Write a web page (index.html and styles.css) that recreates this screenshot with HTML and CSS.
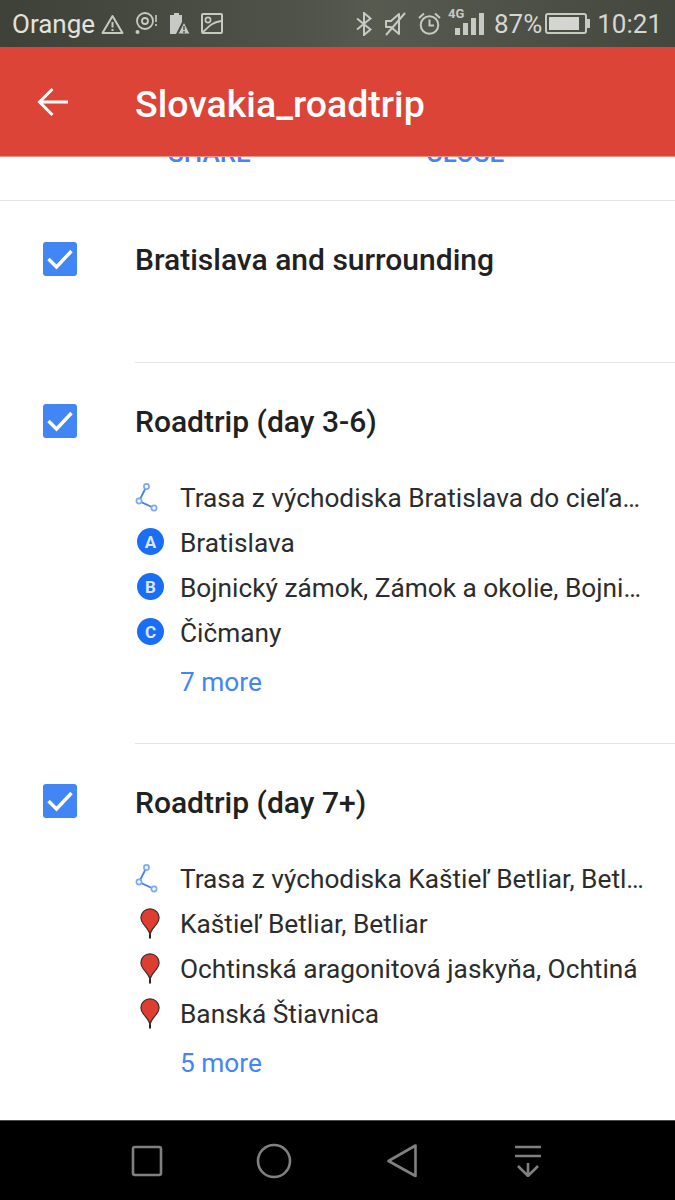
FILE: index.html
```html
<!DOCTYPE html>
<html lang="en">
<head>
    <meta charset="UTF-8">
    <meta name="viewport" content="width=device-width, initial-scale=1.0">
    <title>Slovakia_roadtrip</title>
    <link rel="stylesheet" href="styles.css">
</head>
<body>
    <svg class="defs" width="0" height="0">
        <symbol id="route" viewBox="0 0 24 30">
            <path d="M11.500 3.500 L4 18 L19 25" fill="none" stroke="#3f7ff0" stroke-width="1.800"/>
            <circle cx="11.500" cy="3.500" r="2.600" fill="#fff" stroke="#79a9f8" stroke-width="1.700"/>
            <circle cx="4" cy="18" r="2.600" fill="#fff" stroke="#79a9f8" stroke-width="1.700"/>
            <circle cx="19" cy="25" r="2.600" fill="#fff" stroke="#79a9f8" stroke-width="1.700"/>
        </symbol>
        <symbol id="pin" viewBox="0 0 20 31">
            <path d="M10 20 V30.500" stroke="#2e2422" stroke-width="2"/>
            <path d="M10 27 C9.600 22.500 7 20.500 3.800 16.500 C2 14.500 0.900 12.500 0.900 9.800 C0.900 4.800 5 0.800 10 0.800 C15 0.800 19.100 4.800 19.100 9.800 C19.100 12.500 18 14.500 16.200 16.500 C13 20.500 10.400 22.500 10 27 Z" fill="#de3e32" stroke="#40302e" stroke-width="1.200"/>
        </symbol>
    </svg>

    <!-- Status bar -->
    <div class="status-bar">
        <div class="status-left">
            <span class="carrier">Orange</span>
            <svg class="ic" width="23" height="20" viewBox="0 0 23 20"><path d="M11.500 2 L21.500 19 H1.500 Z" fill="none" stroke="#c8c8c4" stroke-width="2" stroke-linejoin="round"/><path d="M11.500 8 V13.500 M11.500 15 V17" stroke="#c8c8c4" stroke-width="2"/></svg>
            <svg class="ic" width="23" height="23" viewBox="0 0 23 23"><circle cx="10" cy="9" r="8" fill="none" stroke="#c8c8c4" stroke-width="1.800"/><circle cx="10" cy="9" r="3" fill="none" stroke="#c8c8c4" stroke-width="1.800"/><path d="M21 3 V10 M21 12 V14" stroke="#c8c8c4" stroke-width="1.600"/><circle cx="2.500" cy="20" r="2" fill="#c8c8c4"/></svg>
            <svg class="ic" width="21" height="22" viewBox="0 0 21 22"><path d="M5 0 H10 V2 H13 V9 L7 21 H1 V2 H5 Z" fill="#c8c8c4"/><path d="M15 9 L21 21 H9 Z" fill="#c8c8c4" stroke="#4a4d41" stroke-width="1"/><path d="M15 13 V17 M15 18 V20" stroke="#4a4d41" stroke-width="1.400"/></svg>
            <svg class="ic" width="22" height="21" viewBox="0 0 22 21"><rect x="1" y="1" width="20" height="19" rx="1" fill="none" stroke="#c8c8c4" stroke-width="2"/><circle cx="7" cy="7" r="2.600" fill="none" stroke="#c8c8c4" stroke-width="1.600"/><path d="M2 19 C7 15 9 10 20 8" fill="none" stroke="#c8c8c4" stroke-width="1.800"/></svg>
        </div>
        <div class="status-right">
            <svg class="ic" width="18" height="24" viewBox="0 0 18 24"><path d="M2 6.500 L15.500 17.500 L9 23 V1 L15.500 6.500 L2 17.500" fill="none" stroke="#c8c8c4" stroke-width="2"/></svg>
            <svg class="ic" width="23" height="24" viewBox="0 0 23 24"><path d="M2 9 H7 L15 2 V22 L7 15 H2 Z" fill="none" stroke="#c8c8c4" stroke-width="2" stroke-linejoin="round"/><path d="M2 23 L21 1" stroke="#c8c8c4" stroke-width="2"/></svg>
            <svg class="ic" width="23" height="23" viewBox="0 0 23 23"><circle cx="11.500" cy="13" r="8.800" fill="none" stroke="#c8c8c4" stroke-width="2"/><path d="M11.500 7.500 V13.500 H16 M1 6 L6 1.500 M22 6 L17 1.500" fill="none" stroke="#c8c8c4" stroke-width="2"/></svg>
            <div class="signal">
                <span class="net">4G</span>
                <span class="bar bar-1"></span>
                <span class="bar bar-2"></span>
                <span class="bar bar-3"></span>
                <span class="bar bar-4"></span>
            </div>
            <span class="percent">87%</span>
            <div class="battery"><span class="battery-fill"></span></div>
            <span class="clock">10:21</span>
        </div>
    </div>

    <!-- App bar -->
    <header class="app-bar">
        <svg class="back" width="31" height="30" viewBox="0 0 31 30"><path d="M31 15 H3 M15.500 2 L2.500 15 L15.500 28" fill="none" stroke="#fff" stroke-width="3"/></svg>
        <h1 class="app-title">Slovakia_roadtrip</h1>
    </header>

    <main class="content">
        <div class="actions">
            <span class="action action-share">SHARE</span>
            <span class="action action-close">CLOSE</span>
        </div>

        <section class="layer layer-first">
            <div class="check"><svg width="34" height="34" viewBox="0 0 34 34"><path d="M5.500 17 L13.500 25 L28.500 9" fill="none" stroke="#fff" stroke-width="3.400"/></svg></div>
            <div class="layer-body">
                <h2 class="layer-title">Bratislava and surrounding</h2>
            </div>
        </section>

        <section class="layer layer-two">
            <div class="check"><svg width="34" height="34" viewBox="0 0 34 34"><path d="M5.500 17 L13.500 25 L28.500 9" fill="none" stroke="#fff" stroke-width="3.400"/></svg></div>
            <div class="layer-body">
                <h2 class="layer-title">Roadtrip (day 3-6)</h2>
                <ul class="places">
                    <li class="place"><span class="place-icon"><svg class="route-icon"><use href="#route"/></svg></span><span class="place-name">Trasa z východiska Bratislava do cieľa…</span></li>
                    <li class="place"><span class="place-icon"><span class="badge">A</span></span><span class="place-name">Bratislava</span></li>
                    <li class="place"><span class="place-icon"><span class="badge">B</span></span><span class="place-name">Bojnický zámok, Zámok a okolie, Bojni…</span></li>
                    <li class="place"><span class="place-icon"><span class="badge">C</span></span><span class="place-name">Čičmany</span></li>
                </ul>
                <a class="more">7 more</a>
            </div>
        </section>

        <section class="layer layer-three">
            <div class="check"><svg width="34" height="34" viewBox="0 0 34 34"><path d="M5.500 17 L13.500 25 L28.500 9" fill="none" stroke="#fff" stroke-width="3.400"/></svg></div>
            <div class="layer-body">
                <h2 class="layer-title">Roadtrip (day 7+)</h2>
                <ul class="places">
                    <li class="place"><span class="place-icon"><svg class="route-icon"><use href="#route"/></svg></span><span class="place-name">Trasa z východiska Kaštieľ Betliar, Betl…</span></li>
                    <li class="place"><span class="place-icon"><svg class="pin-icon"><use href="#pin"/></svg></span><span class="place-name">Kaštieľ Betliar, Betliar</span></li>
                    <li class="place"><span class="place-icon"><svg class="pin-icon"><use href="#pin"/></svg></span><span class="place-name">Ochtinská aragonitová jaskyňa, Ochtiná</span></li>
                    <li class="place"><span class="place-icon"><svg class="pin-icon"><use href="#pin"/></svg></span><span class="place-name">Banská Štiavnica</span></li>
                </ul>
                <a class="more">5 more</a>
            </div>
        </section>
    </main>

    <!-- Navigation bar -->
    <footer class="nav-bar">
        <svg width="32" height="32" viewBox="0 0 32 32"><rect x="2" y="2" width="28" height="28" rx="2" fill="none" stroke="#808080" stroke-width="2.600"/></svg>
        <svg width="36" height="36" viewBox="0 0 36 36"><circle cx="18" cy="18" r="16" fill="none" stroke="#808080" stroke-width="2.600"/></svg>
        <svg class="nav-back" width="32" height="36" viewBox="0 0 32 36"><path d="M29.500 2.500 V33 L2.500 18 Z" fill="none" stroke="#808080" stroke-width="2.600" stroke-linejoin="round"/></svg>
        <svg class="nav-hide" width="28" height="32" viewBox="0 0 28 32"><path d="M1 2 H27 M1 11 H27 M14 18 V31 M4 21 L14 31 L24 21" fill="none" stroke="#808080" stroke-width="2.600"/></svg>
    </footer>
</body>
</html>
```

FILE: styles.css
```css
* {
    box-sizing: border-box;
}

body {
    margin: 0;
    width: 675px;
    height: 1200px;
    overflow: hidden;
    display: flex;
    flex-direction: column;
    font-family: Roboto, "Noto Sans", sans-serif;
    background-color: #fff;
    color: #212121;
}

.defs {
    position: absolute;
}

/* status bar */
.status-bar {
    height: 47px;
    flex: none;
    display: flex;
    justify-content: space-between;
    padding: 0 13px 0 12px;
    background: linear-gradient(90deg, #3e4137 0%, #50534a 45%, #565a4f 55%, #44473e 100%);
    color: #d6d6d2;
}

.status-left,
.status-right {
    display: flex;
    align-items: center;
}

.carrier {
    font-size: 26px;
    margin-right: 6px;
    color: #e2e2de;
}

.status-left .ic {
    margin-right: 11px;
}

.status-right .ic {
    margin-right: 11px;
}

.signal {
    position: relative;
    align-self: flex-start;
    width: 36px;
    height: 27px;
    margin-top: 8px;
    display: flex;
    align-items: flex-end;
    justify-content: flex-end;
    gap: 3px;
    margin-left: -4px;
    margin-right: 10px;
}

.net {
    position: absolute;
    left: 0;
    top: -2px;
    font-size: 13px;
    font-weight: 700;
    color: #c8c8c4;
}

.bar {
    width: 5px;
    background-color: #c8c8c4;
}

.bar-1 { height: 7px; }
.bar-2 { height: 12px; }
.bar-3 { height: 17px; }
.bar-4 { height: 22px; }

.percent {
    font-size: 26px;
    margin-right: 3px;
}

.battery {
    width: 42px;
    height: 21px;
    border: 2px solid #c8c8c4;
    border-radius: 3px;
    padding: 2px;
    margin-right: 10px;
    position: relative;
}

.battery::after {
    content: "";
    position: absolute;
    right: -5px;
    top: 4px;
    width: 3px;
    height: 9px;
    background-color: #c8c8c4;
}

.battery-fill {
    display: block;
    width: 87%;
    height: 100%;
    background-color: #d4d4d0;
}

.clock {
    font-size: 26px;
}

/* app bar */
.app-bar {
    height: 110px;
    flex: none;
    display: flex;
    align-items: center;
    padding-left: 37px;
    background-color: #db4437;
    border-bottom: 1px solid #ec8f87;
}

.back {
    margin-right: 67px;
}

.app-title {
    margin: 0;
    padding-top: 4px;
    font-size: 37.500px;
    font-weight: 500;
    color: #fff;
}

/* layers list */
.content {
    flex: 1;
    overflow: hidden;
}

.actions {
    height: 44px;
    border-bottom: 1px solid #e6e6e6;
    overflow: hidden;
    display: flex;
    font-size: 26px;
    font-weight: 500;
    color: #4285f4;
    line-height: 26px;
}

.action {
    margin-top: -17px;
}

.action-share {
    margin-left: 168px;
}

.action-close {
    margin-left: 175px;
}

.layer {
    display: flex;
    padding-left: 43px;
}

.layer-first {
    height: 162px;
}

.layer-two {
    height: 381px;
}

.check {
    width: 34px;
    height: 34px;
    margin-top: 41px;
    margin-right: 58px;
    flex: none;
    background-color: #4285f4;
    border-radius: 3px;
}

.layer-three .check {
    margin-top: 40px;
}

.check svg {
    display: block;
}

.layer-body {
    flex: 1;
    min-width: 0;
    border-bottom: 1px solid #e6e6e6;
    padding-top: 41px;
}

.layer-three .layer-body {
    border-bottom: none;
}

.layer-title {
    margin: 0;
    font-size: 30px;
    line-height: 36px;
    font-weight: 500;
    color: #212121;
}

.places {
    list-style: none;
    margin: 35px 0 0;
    padding: 0;
}

.place {
    height: 45px;
    display: flex;
    align-items: center;
}

.place-icon {
    width: 45px;
    flex: none;
    display: flex;
    align-items: center;
}

.place-name {
    font-size: 26.250px;
    white-space: nowrap;
    color: #2c2c2c;
}

.route-icon {
    width: 24px;
    height: 30px;
}

.pin-icon {
    width: 20px;
    height: 31px;
    margin-left: 5px;
    margin-bottom: 1px;
}

.badge {
    width: 27px;
    height: 27px;
    margin-left: 2px;
    margin-bottom: 2px;
    border-radius: 50%;
    background-color: #1a6ef5;
    color: #dbe7ff;
    font-size: 17px;
    font-weight: 700;
    display: flex;
    align-items: center;
    justify-content: center;
}

.more {
    display: block;
    margin-top: 5px;
    margin-left: 45px;
    font-size: 26.250px;
    line-height: 45px;
    color: #4285f4;
}

/* navigation bar */
.nav-bar {
    height: 80px;
    flex: none;
    display: flex;
    align-items: center;
    background-color: #000;
    border-top: 1px solid #4a4a4a;
    padding-left: 131px;
    padding-top: 1px;
    gap: 93px;
}

.nav-back {
    margin-left: 1px;
}

.nav-hide {
    margin-left: 3px;
}
```
